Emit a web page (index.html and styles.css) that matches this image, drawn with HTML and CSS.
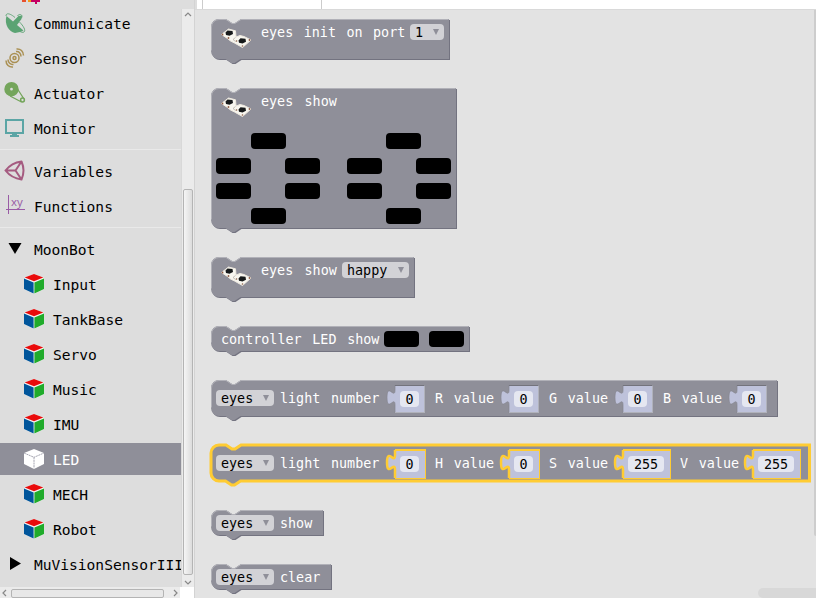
FILE: index.html
```
<!DOCTYPE html>
<html lang="en">
<head>
<meta charset="utf-8">
<title>Blocks</title>
<link rel="stylesheet" href="styles.css">
</head>
<body>
<svg class="defs" aria-hidden="true">
<defs>
<symbol id="cube" viewBox="0 0 22 22"><path fill="#f4f4f4" d="M11 1l10 3.800v11.500l-10 4.700-10-4.700V4.800z"/><path fill="#e90b0b" d="M11 1l9.300 3.400L11 8.300 1.700 4.400z"/><path fill="#00559b" d="M1 5.400l9.600 4v11.200L1 16z"/><path fill="#20ab2b" d="M21 5.400l-9.600 4v11.200L21 16z"/></symbol>
<symbol id="boards" viewBox="0 0 32 22"><g stroke-linejoin="round"><path fill="#f8f6ef" stroke="#eee9df" d="M1.500 7.500L8.500 2l7 1.800.5 6.200 4-1.500L24 9.500l7 3.500-8.500 7.500-8-4.500-4-2-3-2.500z"/></g><path fill="none" stroke="#a39c94" stroke-width=".6" d="M15.500 10.500l-2.500 2 2.500 2"/><path fill="#16191a" d="M5.500 5.500l2-2 5 .5.500 3-3.500 1.700-3.500-.7zM18.500 13.500l2-2.300 5 .5.500 3-3.500 1.800-3.500-.7z"/><g fill="#8d5c45"><circle cx="2.500" cy="7.500" r=".9"/><circle cx="8.500" cy="11" r=".9"/><circle cx="29.500" cy="13" r=".9"/><circle cx="22.500" cy="19" r=".8"/><circle cx="16.500" cy="14" r=".8"/></g></symbol>
</defs>
</svg>
<div class="app">
<aside class="toolbox">
<div class="view">
<nav class="tree">
<div class="row cut"><svg class="ic" viewBox="0 0 22 22"><path fill="#e8502d" d="M4 8h4v11H4z"/><path fill="#f39a18" d="M10 8h3v11h-3z"/><path fill="#c60062" d="M13 8h9v11h-3v2h-2v-2h-4z"/></svg></div>
<div class="row"><svg class="ic" viewBox="0 0 22 22"><path fill="#5ba373" d="M2.500 4L9 9.500 14.500 4l3.500-.5-.5 3.500-4.500 6 6.500 5.500L16 20l-5 1C5 20 0 12 2.500 4z"/><path fill="none" stroke="#5ba373" stroke-width=".9" d="M2 4c0-4 5-2 9 1.500M15.500 10c4 4 6.500 8.500 4.500 10-1 .8-3 0-4-.5M13.500 4c1-2.500 6-2 4 2"/></svg><span>Communicate</span></div>
<div class="row"><svg class="ic" viewBox="0 0 22 22" fill="none" stroke="#aa9053" stroke-width="1.500"><circle cx="10.500" cy="11" r="4.500"/><circle cx="10.500" cy="11" r="1.500"/><path d="M12 4.500c3-.5 5 2 5 5M12.500 2c4-.5 7 2.500 7 6.500M9.500 17.500c-3 .5-5.500-2-5.500-5M9 20c-4 .5-7-2.500-7-6.500"/></svg><span>Sensor</span></div>
<div class="row"><svg class="ic" viewBox="0 0 22 22"><path fill="none" stroke="#74a55b" stroke-width="1.300" d="M13.500 7l6.500 10M6 14l11.500 6"/><path fill="#74a55b" fill-rule="evenodd" d="M7.500 0a7.200 7.200 0 1 0 0 14.400A7.200 7.200 0 1 0 7.500 0zm0 5.800a1.400 1.400 0 1 1 0 2.800 1.400 1.400 0 0 1 0-2.800z"/><circle cx="18.500" cy="18" r="1.900" fill="none" stroke="#74a55b" stroke-width="1.500"/></svg><span>Actuator</span></div>
<div class="row"><svg class="ic" viewBox="0 0 22 22"><path fill="none" stroke="#5ba5a5" stroke-width="2" d="M2 3h17v13H2z"/><path fill="#5ba5a5" d="M8 16h5v2h2v2H6v-2h2z"/></svg><span>Monitor</span></div>
<hr>
<div class="row"><svg class="ic" viewBox="0 0 22 22" fill="none" stroke="#a55b80" stroke-width="2" stroke-linejoin="round"><path d="M1.500 10.500C5 6 10 2.500 17.500 1.500q4 9 0 18C10 18.500 5 15 1.500 10.500h10l6-9M11.500 10.500l6 9"/></svg><span>Variables</span></div>
<div class="row"><svg class="ic" viewBox="0 0 22 22"><path fill="none" stroke="#995ba5" d="M4.500 0v19M2 14.500h19"/><text class="xy" x="7" y="11">xy</text></svg><span>Functions</span></div>
<hr>
<div class="row"><svg class="ic" viewBox="0 0 22 22"><path d="M4.500 5h13l-6.500 11z"/></svg><span>MoonBot</span></div>
<div class="row sub"><svg class="ic"><use href="#cube"/></svg><span>Input</span></div>
<div class="row sub"><svg class="ic"><use href="#cube"/></svg><span>TankBase</span></div>
<div class="row sub"><svg class="ic"><use href="#cube"/></svg><span>Servo</span></div>
<div class="row sub"><svg class="ic"><use href="#cube"/></svg><span>Music</span></div>
<div class="row sub"><svg class="ic"><use href="#cube"/></svg><span>IMU</span></div>
<div class="row sub selected"><svg class="ic" viewBox="0 0 22 22"><path fill="#fff" d="M11 1l10 4v11l-10 5-10-5V5z"/><path fill="none" stroke="#9090a0" stroke-width=".8" stroke-dasharray="2 .6" d="M1 5l10 4.300 10-4.300M11 9.300v11"/></svg><span>LED</span></div>
<div class="row sub"><svg class="ic"><use href="#cube"/></svg><span>MECH</span></div>
<div class="row sub"><svg class="ic"><use href="#cube"/></svg><span>Robot</span></div>
<div class="row"><svg class="ic" viewBox="0 0 22 22"><path d="M6 4l11 6.500L6 17z"/></svg><span>MuVisionSensorIII</span></div>
</nav>
<div class="vbar"><svg viewBox="0 0 12 9"><path d="M3 7l3-3 3 3"/></svg><div class="vthumb"></div><svg viewBox="0 0 12 9"><path d="M3 3l3 3 3-3"/></svg></div>
</div>
<div class="bottom"><div class="hbar"><svg viewBox="0 0 9 12"><path d="M6 3L3 6l3 3"/></svg><div class="hthumb"></div><svg viewBox="0 0 9 12"><path d="M3 3l3 3-3 3"/></svg></div></div>
</aside>
<main class="main">
<div class="tabs"><div class="tab"></div></div>
<div class="flyout">

<div class="block h40 w238"><svg class="shape"><path class="dark" d="M0 8a8 8 0 0 1 8-8h7l6 4h3l6-4h208v40H29.500l-6 4h-3l-6-4H8a8 8 0 0 1-8-8z"/><path class="fill" d="M0 8a8 8 0 0 1 8-8h7l6 4h3l6-4h208v40H29.500l-6 4h-3l-6-4H8a8 8 0 0 1-8-8z"/><path class="light" d="M.5 31.500V8A7.500 7.500 0 0 1 8 .5h7l6 4h3l6-4h207.500"/></svg>
<svg class="pic"><use href="#boards"/></svg><span class="label init">eyes init on port</span><span class="drop d1">1<i></i></span></div>

<div class="block h140 w245"><svg class="shape"><path class="dark" d="M0 8a8 8 0 0 1 8-8h7l6 4h3l6-4h215v140H29.500l-6 4h-3l-6-4H8a8 8 0 0 1-8-8z"/><path class="fill" d="M0 8a8 8 0 0 1 8-8h7l6 4h3l6-4h215v140H29.500l-6 4h-3l-6-4H8a8 8 0 0 1-8-8z"/><path class="light" d="M.5 131.500V8A7.500 7.500 0 0 1 8 .5h7l6 4h3l6-4h214.500"/></svg>
<div class="line"><svg class="pic"><use href="#boards"/></svg><span class="label es">eyes show</span></div>
<div class="leds">
<b class="c2"></b><b class="c5"></b>
<b class="c1"></b><b class="c3"></b><b class="c4"></b><b class="c6"></b>
<b class="c1"></b><b class="c3"></b><b class="c4"></b><b class="c6"></b>
<b class="c2"></b><b class="c5"></b>
</div></div>

<div class="block h40 w203"><svg class="shape"><path class="dark" d="M0 8a8 8 0 0 1 8-8h7l6 4h3l6-4h173v40H29.500l-6 4h-3l-6-4H8a8 8 0 0 1-8-8z"/><path class="fill" d="M0 8a8 8 0 0 1 8-8h7l6 4h3l6-4h173v40H29.500l-6 4h-3l-6-4H8a8 8 0 0 1-8-8z"/><path class="light" d="M.5 31.500V8A7.500 7.500 0 0 1 8 .5h7l6 4h3l6-4h172.500"/></svg>
<svg class="pic"><use href="#boards"/></svg><span class="label es">eyes show</span><span class="drop d5">happy<i></i></span></div>

<div class="block h25 w258"><svg class="shape"><path class="dark" d="M0 8a8 8 0 0 1 8-8h7l6 4h3l6-4h228v25H29.500l-6 4h-3l-6-4H8a8 8 0 0 1-8-8z"/><path class="fill" d="M0 8a8 8 0 0 1 8-8h7l6 4h3l6-4h228v25H29.500l-6 4h-3l-6-4H8a8 8 0 0 1-8-8z"/><path class="light" d="M.5 16.500V8A7.500 7.500 0 0 1 8 .5h7l6 4h3l6-4h227.500"/></svg>
<span class="label first">controller LED show</span><b class="led"></b><b class="led"></b></div>

<div class="block h36 w566"><svg class="shape"><path class="dark" d="M0 8a8 8 0 0 1 8-8h7l6 4h3l6-4h536v36H29.500l-6 4h-3l-6-4H8a8 8 0 0 1-8-8z"/><path class="fill" d="M0 8a8 8 0 0 1 8-8h7l6 4h3l6-4h536v36H29.500l-6 4h-3l-6-4H8a8 8 0 0 1-8-8z"/><path class="light" d="M.5 27.500V8A7.500 7.500 0 0 1 8 .5h7l6 4h3l6-4h535.500"/></svg>
<span class="drop d4">eyes<i></i></span><span class="label long">light number</span>
<span class="num"><svg viewBox="0 0 9 28"><path d="M9 0v5c0 10-8-8-8 7.500s8-2.500 8 7.500v8"/></svg><em>0</em></span><span class="label val">R value</span>
<span class="num"><svg viewBox="0 0 9 28"><path d="M9 0v5c0 10-8-8-8 7.500s8-2.500 8 7.500v8"/></svg><em>0</em></span><span class="label val">G value</span>
<span class="num"><svg viewBox="0 0 9 28"><path d="M9 0v5c0 10-8-8-8 7.500s8-2.500 8 7.500v8"/></svg><em>0</em></span><span class="label val">B value</span>
<span class="num"><svg viewBox="0 0 9 28"><path d="M9 0v5c0 10-8-8-8 7.500s8-2.500 8 7.500v8"/></svg><em>0</em></span></div>

<div class="block h36 w598 active"><svg class="shape"><path class="fill" d="M0 8a8 8 0 0 1 8-8h7l6 4h3l6-4h568.500v36H29.500l-6 4h-3l-6-4H8a8 8 0 0 1-8-8z"/></svg>
<span class="drop d4">eyes<i></i></span><span class="label long">light number</span>
<span class="num"><svg viewBox="0 0 9 28"><path d="M9 0v5c0 10-8-8-8 7.500s8-2.500 8 7.500v8"/></svg><em>0</em></span><span class="label val">H value</span>
<span class="num"><svg viewBox="0 0 9 28"><path d="M9 0v5c0 10-8-8-8 7.500s8-2.500 8 7.500v8"/></svg><em>0</em></span><span class="label val">S value</span>
<span class="num wide"><svg viewBox="0 0 9 28"><path d="M9 0v5c0 10-8-8-8 7.500s8-2.500 8 7.500v8"/></svg><em>255</em></span><span class="label val">V value</span>
<span class="num wide"><svg viewBox="0 0 9 28"><path d="M9 0v5c0 10-8-8-8 7.500s8-2.500 8 7.500v8"/></svg><em>255</em></span></div>

<div class="block h25 w112"><svg class="shape"><path class="dark" d="M0 8a8 8 0 0 1 8-8h7l6 4h3l6-4h82v25H29.500l-6 4h-3l-6-4H8a8 8 0 0 1-8-8z"/><path class="fill" d="M0 8a8 8 0 0 1 8-8h7l6 4h3l6-4h82v25H29.500l-6 4h-3l-6-4H8a8 8 0 0 1-8-8z"/><path class="light" d="M.5 16.500V8A7.500 7.500 0 0 1 8 .5h7l6 4h3l6-4h81.500"/></svg>
<span class="drop d4">eyes<i></i></span><span class="label">show</span></div>

<div class="block h25 w120"><svg class="shape"><path class="dark" d="M0 8a8 8 0 0 1 8-8h7l6 4h3l6-4h90v25H29.500l-6 4h-3l-6-4H8a8 8 0 0 1-8-8z"/><path class="fill" d="M0 8a8 8 0 0 1 8-8h7l6 4h3l6-4h90v25H29.500l-6 4h-3l-6-4H8a8 8 0 0 1-8-8z"/><path class="light" d="M.5 16.500V8A7.500 7.500 0 0 1 8 .5h7l6 4h3l6-4h89.500"/></svg>
<span class="drop d4">eyes<i></i></span><span class="label">clear</span></div>

<div class="scroll-v"></div><div class="scroll-h"></div>
</div>
</main>
</div>
</body>
</html>
```
FILE: styles.css
```
* { box-sizing: border-box; }
body { margin: 0; overflow: hidden; font-family: "DejaVu Sans Mono", monospace; }
.defs { position: absolute; width: 0; height: 0; }
.app { display: flex; width: 816px; height: 598px; background: #e3e3e3; }

.toolbox { width: 195px; height: 598px; flex: none; display: flex; flex-direction: column; background: #ddd; border-right: 1px solid #d3d3d3; }
.view { display: flex; height: 587px; }
.tree { width: 181px; height: 587px; overflow: hidden; flex: none; }
.row { display: flex; align-items: center; height: 32px; margin-bottom: 3px; padding-left: 4px; font-size: 14.6px; color: #000; white-space: nowrap; }
.row span { margin: 2px 0 0 8px; line-height: 30px; letter-spacing: -.02px; }
.row.cut { height: 5px; align-items: flex-end; margin-bottom: 2px; overflow: hidden; padding-left: 18px; }
.ic { width: 22px; height: 22px; flex: none; }
.row.sub { padding-left: 23px; }
.row.selected { background: #8f8f99; color: #fff; }
.xy { font-size: 11.5px; fill: #995ba5; font-family: "Open Sans", sans-serif; }
hr { height: 1px; border: 0; background: #e9e9e9; margin: 5px 0; }
.vbar { width: 13px; margin-top: 9px; display: flex; flex-direction: column; background: #ebebeb; border-left: 1px solid #d8d8d8; }
.vbar svg { width: 12px; height: 9px; flex: none; }
.vbar path, .hbar path { fill: none; stroke: #888; stroke-width: 1.2; }
.vthumb { height: 386px; margin: auto 1px 3px; border: 1px solid #b4b4b4; border-radius: 2px; background: linear-gradient(90deg, #f5f5f5, #dcdcdc); }
.bottom { height: 11px; background: #fff; }
.hbar { width: 180px; height: 11px; display: flex; background: #ebebeb; }
.hbar svg { width: 9px; height: 12px; flex: none; }
.hthumb { width: 153px; margin: 2px 7px 0 2px; border: 1px solid #b4b4b4; border-radius: 2px; background: #e8e8e8; }

.main { width: 621px; display: flex; flex-direction: column; }
.tabs { height: 9px; background: #fff; border-left: 2px solid #ddd; padding-left: 5px; flex: none; }
.tab { width: 120px; height: 9px; border: solid #ccc; border-width: 0 1px; }
.flyout { position: relative; height: 589px; border-top: 1px solid #d9d9d9; padding: 9px 0 0 16px; display: flex; flex-direction: column; gap: 29px; overflow: hidden; }
.block { position: relative; flex: none; display: flex; padding-left: 5px; font-size: 13.4px; color: #fff; white-space: nowrap; }
.shape { position: absolute; left: 0; top: 0; width: 100%; height: 100%; overflow: visible; }
.fill { fill: #8f8f99; }
.dark { fill: #737380; transform: translate(1px, 1px); }
.light { fill: none; stroke: #b1b1b8; }
.block > *:not(.shape), .line > * { position: relative; flex: none; }
.h40 { height: 40px; }
.h140 { height: 140px; flex-direction: column; }
.h25 { height: 25px; }
.h36 { height: 36px; }
.w238 { width: 238px; }
.w245 { width: 245px; }
.w203 { width: 203px; }
.w258 { width: 258px; }
.w566 { width: 566px; }
.w598 { width: 598px; }
.w112 { width: 112px; }
.w120 { width: 120px; }
.label { line-height: 18px; margin-top: 5px; word-spacing: 2.6px; }
.pic { width: 32px; height: 22px; margin: 8px 9px 0 4px; }
.line { display: flex; height: 45px; }
.init { width: 144px; word-spacing: 2.4px; }
.es { width: 76px; word-spacing: 3.2px; }
.drop { display: flex; justify-content: space-between; align-items: flex-start; height: 16px; margin-top: 5px; padding: 0 5px; border-radius: 4px; background: #d2d2d6; color: #000; line-height: 18px; }
.drop i { border: solid transparent; border-width: 6px 3px 0; border-top-color: #8f8f99; margin-top: 5px; }
.d1 { width: 34px; margin-left: 5px; }
.d5 { width: 67px; margin-left: 5px; }
.d4 { width: 58px; margin-right: 6px; }
.h36 .drop, .h36 .label { margin-top: 10px; }
.leds { display: grid; grid-template-columns: 35px 34px 35px 27px 39px 30px 35px; grid-auto-rows: 16px; row-gap: 9px; }
.leds b { height: 16px; width: 35px; border-radius: 4px; background: #000; }
.c1 { grid-column: 1; }
.c2 { grid-column: 2; }
.c3 { grid-column: 3; }
.c4 { grid-column: 5; }
.c5 { grid-column: 6; }
.c6 { grid-column: 7; }
.led { width: 35px; height: 16px; margin: 5px 10px 0 0; border-radius: 4px; background: #000; }
.first { width: 158px; margin-left: 5px; margin-right: 5px; }
.long { width: 100px; margin-right: 6px; }
.val { width: 59px; margin: 0 6px 0 10px; }
.num { width: 39px; height: 28px; margin-top: 5px; display: flex; background: linear-gradient(#bec2db, #bec2db) 9px 0 / 30px 28px no-repeat; }
.num::after { content: ""; position: absolute; left: 9px; right: 0; top: 0; bottom: 0; border: solid #b0b2bb; border-width: 1px 1px 1px 0; border-top-color: #73737c; }
.num svg { width: 9px; height: 28px; overflow: visible; position: relative; flex: none; }
.num path { fill: #bec2db; stroke: #85858f; stroke-width: .7; }
.num em { width: 19px; height: 16px; margin: 6px 0 0 5px; border-radius: 4px; background: #e5e7f1; color: #000; font-style: normal; line-height: 17px; text-align: center; }
.num.wide { width: 56px; background-size: 47px 28px; }
.num.wide em { width: 36px; }
.wide + .val { width: 58px; }
.active .fill { stroke: #fc3; stroke-width: 3; }
.active .num path { stroke: #fc3; stroke-width: 2.5; }
.active .num::after { border-color: #fc3; border-width: 2px 1px 1px 0; top: -1px; right: -1px; bottom: -1px; }
.scroll-v { position: absolute; right: 0; top: 0; width: 2px; height: 526px; background: #cdcdcd; border-radius: 0 0 0 2px; }
.scroll-h { position: absolute; right: 0; bottom: 0; width: 58px; height: 10px; background: #d8d8d8; border-radius: 5px 0 0 5px; }
```
